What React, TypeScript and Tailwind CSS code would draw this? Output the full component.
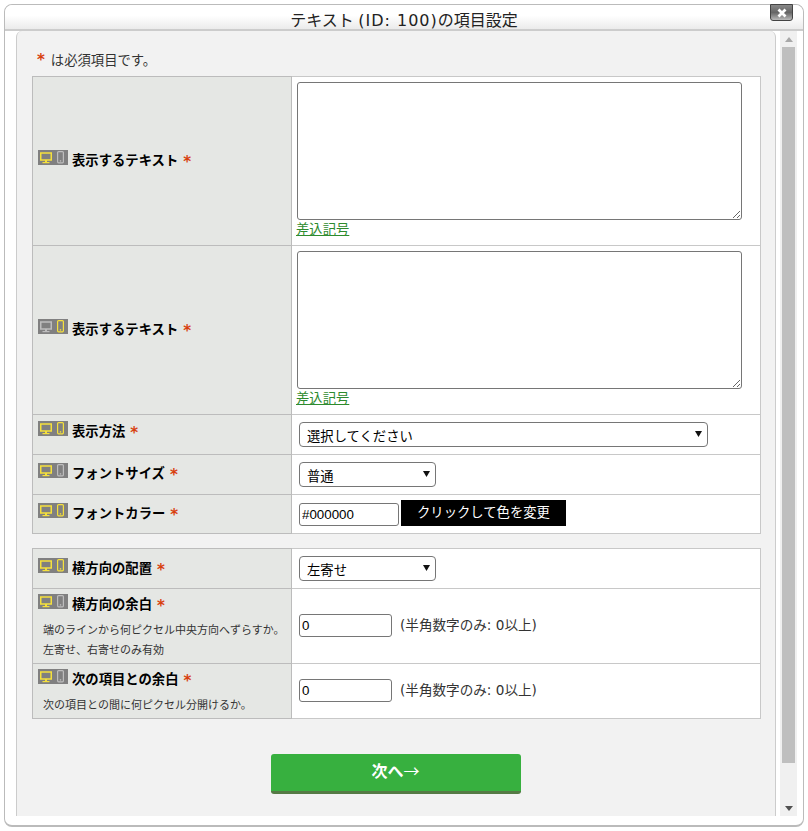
const FONT = 'font-["Liberation_Sans","Noto_Sans_CJK_JP",sans-serif]';

function DeviceIcons({ pc, phone }: { pc: boolean; phone: boolean }) {
  const pcColor = pc ? '#f5e03c' : '#bdbdbd';
  const phoneColor = phone ? '#f5e03c' : '#bdbdbd';
  return (
    <svg width="30" height="15" viewBox="0 0 30 15" className="block shrink-0">
      <rect width="30" height="15" fill="#808080" />
      <rect x="2.75" y="3" width="10.5" height="7" fill="none" stroke={pcColor} strokeWidth="1.5" />
      <rect x="7" y="10" width="2" height="2" fill={pcColor} />
      <rect x="4.5" y="12" width="7" height="1.2" fill={pcColor} />
      <rect x="19.6" y="1.6" width="5.8" height="11.2" rx="1" fill="none" stroke={phoneColor} strokeWidth="1.2" />
      <rect x="21.8" y="10.2" width="1.4" height="1.4" fill={phoneColor} />
    </svg>
  );
}

function Req() {
  return (
    <span className='ml-[5px] inline-block h-[10px] translate-y-[2px] font-["DejaVu_Sans",sans-serif] text-[15px] leading-[10px] font-bold text-[#d8400f]'>
      *
    </span>
  );
}

function Label({ text, pc, phone, note }: { text: string; pc: boolean; phone: boolean; note?: string[] }) {
  return (
    <div className="pl-[5px]">
      <div className="flex items-start gap-[4px]">
        <DeviceIcons pc={pc} phone={phone} />
        <span className="pt-[1px] text-[13.33px] leading-[20px] font-bold text-black">
          {text}
          <Req />
        </span>
      </div>
      {note && (
        <div className="mt-[5px] pl-[5px] text-[11px] leading-[20px] text-[#333]">
          {note.map((line) => (
            <div key={line}>{line}</div>
          ))}
        </div>
      )}
    </div>
  );
}

function TextRow({ pc, phone }: { pc: boolean; phone: boolean }) {
  return (
    <tr className="h-[169px]">
      <td className="w-[259px] border border-[#bcbcbc] bg-[#e5e7e4] pb-[2px] align-middle">
        <Label text="表示するテキスト" pc={pc} phone={phone} />
      </td>
      <td className="border border-[#c8c8c8] bg-white pt-[5px] pl-[5px] align-top">
        <textarea className="block h-[138px] w-[445px] rounded-[3px] border border-[#767676] bg-white" />
        <a className="mt-[1px] -ml-[1px] block text-[13.33px] leading-[18px] text-[#2e8b2e] underline">差込記号</a>
      </td>
    </tr>
  );
}

function SelectBox({ width, value }: { width: string; value: string }) {
  return (
    <div className={`relative ${width}`}>
      <select
        defaultValue={value}
        className="h-[25px] w-full appearance-none rounded-[4px] border border-[#767676] bg-white pt-[4px] pl-[7px] text-[13.33px] text-black"
      >
        <option>{value}</option>
      </select>
      <svg width="7" height="6" viewBox="0 0 7 6" className="absolute top-[9px] right-[6px]">
        <path d="M0 0H7L3.5 6Z" fill="#111" />
      </svg>
    </div>
  );
}

function SelectRow({ text, top, pc, phone, width, value }: { text: string; top: string; pc: boolean; phone: boolean; width: string; value: string }) {
  return (
    <tr className="h-[40px]">
      <td className={`w-[259px] border border-[#bcbcbc] bg-[#e5e7e4] align-top ${top}`}>
        <Label text={text} pc={pc} phone={phone} />
      </td>
      <td className="border border-[#c8c8c8] bg-white pl-[7px] align-middle">
        <SelectBox width={width} value={value} />
      </td>
    </tr>
  );
}

function NumberRow({ text, height, note }: { text: string; height: string; note: string[] }) {
  return (
    <tr className={height}>
      <td className="w-[259px] border border-[#bcbcbc] bg-[#e5e7e4] pt-[5px] align-top">
        <Label text={text} pc={true} phone={false} note={note} />
      </td>
      <td className="border border-[#c8c8c8] bg-white pl-[7px] align-middle">
        <div className="flex items-center gap-[8px] pb-[2px]">
          <input
            defaultValue="0"
            className="h-[23px] w-[93px] rounded-[3px] border border-[#767676] bg-white px-[2px] text-[13.33px] text-black"
          />
          <span className='font-["DejaVu_Sans","Noto_Sans_CJK_JP",sans-serif] text-[13.6px] text-[#333]'>
            (半角数字のみ: 0以上)
          </span>
        </div>
      </td>
    </tr>
  );
}

export default function App() {
  return (
    <div className={`${FONT} h-[831px] w-[808px] bg-white p-[4px]`}>
      <div className="relative flex h-full flex-col rounded-[8px] border border-b-2 border-[#bbbbbb] bg-white">
        <div className="flex h-[24px] shrink-0 items-end justify-center rounded-t-[8px] bg-gradient-to-b from-white from-[44%] to-[#ebebeb] text-[16px] leading-[20px] text-[#222]">
          <span className="translate-y-[2px]">
            テキスト <span className='font-["DejaVu_Sans",sans-serif] tracking-[1px]'>(ID: 100)</span>の項目設定
          </span>
        </div>
        <button className="absolute top-[-1px] right-[10px] flex h-[17px] w-[23px] items-center justify-center rounded-b-[3px] border border-[#444] bg-gradient-to-b from-[#888] via-[#666] to-[#bbb]">
          <svg width="10" height="10" viewBox="0 0 10 10">
            <path d="M1.5 1.5 8.5 8.5M8.5 1.5 1.5 8.5" stroke="#fff" strokeWidth="2.8" />
          </svg>
        </button>
        <div className="flex min-h-0 flex-1 border-t-2 border-[#cccccc] pb-[9px] pl-[11px]">
          <div className="w-[760px] rounded-t-[6px] border-x border-[#cccccc] bg-[#f2f2f2] pl-[15px]">
            <p className="h-[45px] pt-[21px] pl-[5px] text-[13.33px] leading-[18px] text-[#333]">
              <span className='mr-[6px] font-["DejaVu_Sans",sans-serif] text-[15px] leading-[10px] font-bold text-[#d8400f]'>*</span>
              は必須項目です。
            </p>
            <table className="w-[729px] border-collapse">
              <tbody>
                <TextRow pc={true} phone={false} />
                <TextRow pc={false} phone={true} />
                <SelectRow text="表示方法" top="pt-[6px]" pc={true} phone={true} width="w-[409px]" value="選択してください" />
                <SelectRow text="フォントサイズ" top="pt-[8px]" pc={true} phone={false} width="w-[137px]" value="普通" />
                <tr className="h-[39px]">
                  <td className="w-[259px] border border-[#bcbcbc] bg-[#e5e7e4] pt-[8px] align-top">
                    <Label text="フォントカラー" pc={true} phone={true} />
                  </td>
                  <td className="border border-[#c8c8c8] bg-white pl-[7px] align-middle">
                    <div className="flex items-center gap-[2px]">
                      <input
                        defaultValue="#000000"
                        className="h-[23px] w-[100px] rounded-[3px] border border-[#767676] bg-white px-[2px] text-[13.33px] text-black"
                      />
                      <div className="flex h-[26px] w-[165px] -translate-y-[1px] items-center justify-center bg-black text-[13.33px] text-white">
                        クリックして色を変更
                      </div>
                    </div>
                  </td>
                </tr>
              </tbody>
            </table>
            <table className="mt-[14px] w-[729px] border-collapse">
              <tbody>
                <SelectRow text="横方向の配置" top="pt-[9px]" pc={true} phone={true} width="w-[137px]" value="左寄せ" />
                <NumberRow
                  text="横方向の余白"
                  height="h-[75px]"
                  note={['端のラインから何ピクセル中央方向へずらすか。', '左寄せ、右寄せのみ有効']}
                />
                <NumberRow text="次の項目との余白" height="h-[55px]" note={['次の項目との間に何ピクセル分開けるか。']} />
              </tbody>
            </table>
            <div className="mt-[35px] flex w-[729px] justify-center pr-[2px]">
              <button className='h-[40px] w-[250px] rounded-[3px] border-b-[3px] border-[#557a45] bg-[#37b03f] pb-[5px] font-["Noto_Sans_CJK_JP",sans-serif] text-[16px] font-bold text-white'>
                次へ<span className="font-normal">→</span>
              </button>
            </div>
          </div>
          <div className="ml-[4px] flex w-[17px] flex-col items-center bg-[#f0f0f0]">
            <svg width="8" height="5" viewBox="0 0 8 5" className="mt-[6px] shrink-0">
              <path d="M4 0 8 5H0Z" fill="#a8a8a8" />
            </svg>
            <div className="mt-[5px] h-[716px] w-[13px] bg-[#bfbfbf]" />
            <svg width="8" height="5" viewBox="0 0 8 5" className="mt-[43px] shrink-0">
              <path d="M0 0H8L4 5Z" fill="#505050" />
            </svg>
          </div>
        </div>
      </div>
    </div>
  );
}
